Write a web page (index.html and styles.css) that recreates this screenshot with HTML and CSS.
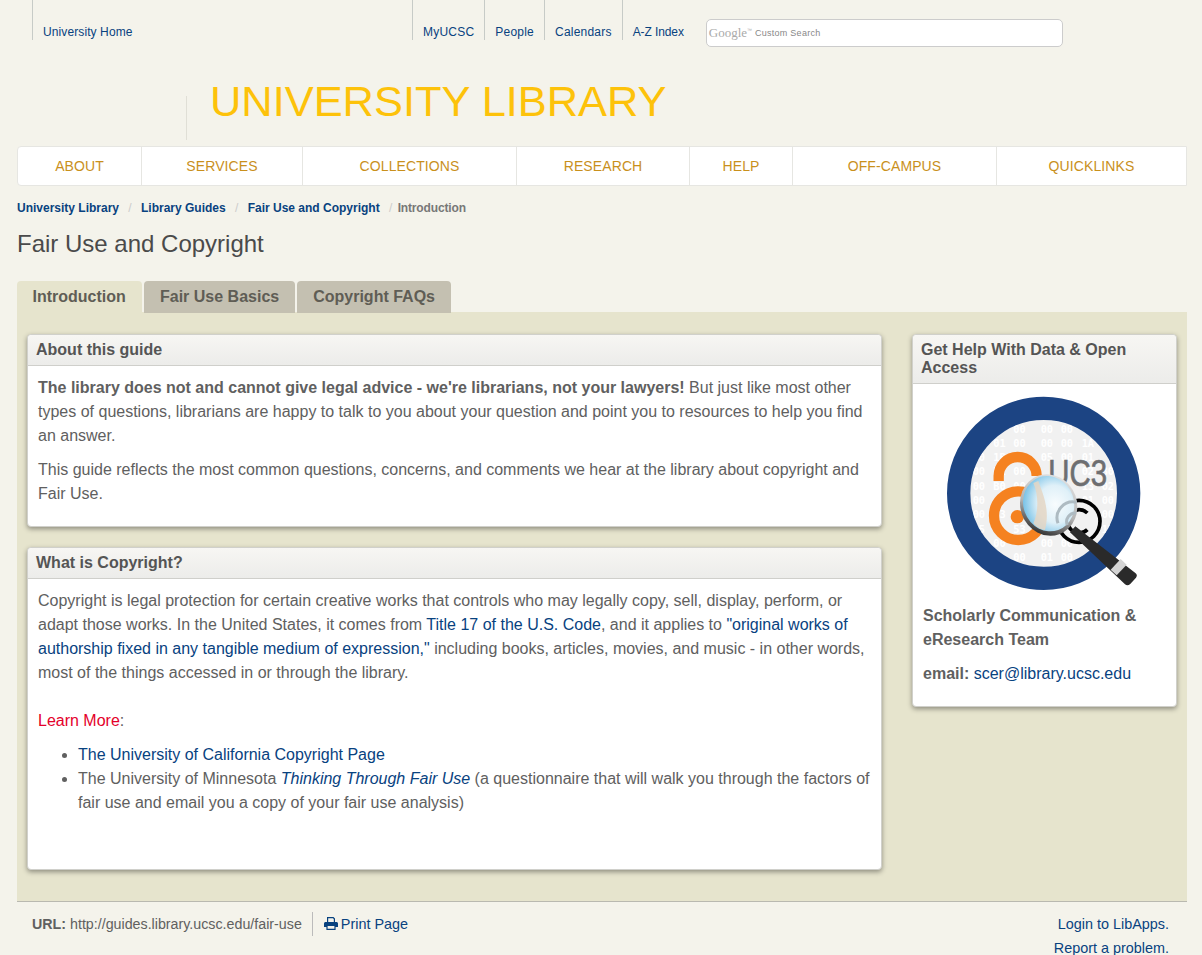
FILE: index.html
```html
<!DOCTYPE html>
<html lang="en">
<head>
<meta charset="utf-8">
<title>Fair Use and Copyright</title>
<link rel="stylesheet" href="styles.css">
</head>
<body>
<div class="topbar">
  <ul class="util util-left">
    <li><a href="#">University Home</a></li>
  </ul>
  <ul class="util util-right">
    <li><a href="#">MyUCSC</a></li>
    <li><a href="#">People</a></li>
    <li><a href="#">Calendars</a></li>
    <li><a href="#">A-Z Index</a></li>
  </ul>
  <div class="search"><span class="g-logo">Google</span><span class="g-tm">™</span><span class="g-text">Custom Search</span></div>
</div>
<div class="brand"><h1 class="brand-title">UNIVERSITY LIBRARY</h1></div>
<nav class="mainnav">
  <a href="#">ABOUT</a>
  <a href="#">SERVICES</a>
  <a href="#">COLLECTIONS</a>
  <a href="#">RESEARCH</a>
  <a href="#">HELP</a>
  <a href="#">OFF-CAMPUS</a>
  <a href="#">QUICKLINKS</a>
</nav>
<ol class="crumbs">
  <li><a href="#">University Library</a></li>
  <li><a href="#">Library Guides</a></li>
  <li><a href="#">Fair Use and Copyright</a></li>
  <li class="current">Introduction</li>
</ol>
<h2 class="page-title">Fair Use and Copyright</h2>
<div class="tabs">
  <a class="tab active" href="#">Introduction</a>
  <a class="tab" href="#">Fair Use Basics</a>
  <a class="tab" href="#">Copyright FAQs</a>
</div>
<main class="content">
  <div class="col-main">
    <section class="panel panel-about">
      <h3 class="panel-head">About this guide</h3>
      <div class="panel-body">
        <p><strong>The library does not and cannot give legal advice - we're librarians, not your lawyers!</strong> But just like most other types of questions, librarians are happy to talk to you about your question and point you to resources to help you find an answer.</p>
        <p>This guide reflects the most common questions, concerns, and comments we hear at the library about copyright and Fair Use.</p>
      </div>
    </section>
    <section class="panel panel-copy">
      <h3 class="panel-head">What is Copyright?</h3>
      <div class="panel-body">
        <p class="flush">Copyright is legal protection for certain creative works that controls who may legally copy, sell, display, perform, or adapt those works. In the United States, it comes from <a href="#">Title 17 of the U.S. Code</a>, and it applies to <a href="#">"original works of authorship fixed in any tangible medium of expression,"</a> including books, articles, movies, and music - in other words, most of the things accessed in or through the library.</p>
        <p class="learn"><span class="red">Learn More</span>:</p>
        <ul class="links">
          <li><a href="#">The University of California Copyright Page</a></li>
          <li>The University of Minnesota <a href="#"><em>Thinking Through Fair Use</em></a> (a questionnaire that will walk you through the factors of fair use and email you a copy of your fair use analysis)</li>
        </ul>
      </div>
    </section>
  </div>
  <aside class="col-side">
    <section class="panel panel-side">
      <h3 class="panel-head">Get Help With Data &amp; Open Access</h3>
      <div class="panel-body side-body">
        <svg class="logo" viewBox="0 0 690 645" width="230" height="215" role="img" aria-label="UC3 logo">
          <defs>
            <radialGradient id="lens" cx="62%" cy="55%" r="62%">
              <stop offset="0" stop-color="#f8fcfe"/>
              <stop offset=".55" stop-color="#dff0f8"/>
              <stop offset="1" stop-color="#7cc4e8"/>
            </radialGradient>
            <linearGradient id="rim" x1="1" y1="0" x2=".2" y2="1">
              <stop offset="0" stop-color="#eeeeee"/>
              <stop offset=".6" stop-color="#b5b5b5"/>
              <stop offset="1" stop-color="#1e1e1e"/>
            </linearGradient>
            <clipPath id="inner"><circle cx="341" cy="325" r="220"/></clipPath>
          </defs>
          <circle cx="341" cy="325" r="255" fill="#f1f1f1" stroke="#1c4483" stroke-width="70"/>
          <g class="hex" clip-path="url(#inner)">
            <text x="250" y="143">00</text><text x="332" y="143">00</text><text x="392" y="143">00</text>
            <text x="190" y="185">01</text><text x="250" y="185">00</text><text x="332" y="185">00</text><text x="392" y="185">00</text><text x="455" y="185">1A</text>
            <text x="128" y="227">00</text><text x="190" y="227">1B</text><text x="332" y="227">05</text><text x="392" y="227">00</text><text x="455" y="227">01</text>
            <text x="128" y="270">00</text><text x="190" y="270">E1</text><text x="250" y="270">00</text><text x="455" y="270">02</text><text x="515" y="270">30</text>
            <text x="128" y="315">00</text><text x="190" y="315">B0</text><text x="250" y="315">00</text><text x="455" y="315">13</text><text x="515" y="315">02</text>
            <text x="128" y="358">00</text><text x="455" y="358">01</text><text x="515" y="358">00</text>
            <text x="128" y="400">00</text><text x="190" y="400">13</text><text x="455" y="400">0D</text><text x="515" y="400">00</text>
            <text x="128" y="443">15</text><text x="250" y="443">53</text><text x="515" y="443">12</text>
            <text x="190" y="485">00</text><text x="332" y="485">00</text><text x="392" y="485">00</text>
            <text x="250" y="527">00</text><text x="332" y="527">01</text><text x="392" y="527">00</text>
          </g>
          <text class="uc3" x="355" y="304" textLength="176" lengthAdjust="spacingAndGlyphs">UC3</text>
          <path d="M206 288 V273 A57 57 0 0 1 320 273" fill="none" stroke="#f58220" stroke-width="31"/>
          <circle cx="265" cy="392" r="73" fill="none" stroke="#f58220" stroke-width="31"/>
          <circle cx="262" cy="395" r="20" fill="#f58220"/>
          <circle cx="447" cy="409" r="63" fill="#f1f1f1" stroke="#000" stroke-width="11"/>
          <path d="M472 384 A35 35 0 1 0 472 434" fill="none" stroke="#000" stroke-width="11"/>
          <path d="M436 424 L420 442 L585 598 Q592 604 600 598 L618 578 Q624 570 616 564Z" fill="#2a2a2a"/>
          <path d="M572 522 L542 554 L560 571 L590 539Z" fill="#d4d4d4"/>
          <ellipse cx="356" cy="360" rx="85" ry="93" transform="rotate(-20 356 360)" fill="url(#rim)"/>
          <ellipse cx="356" cy="356" rx="76" ry="84" transform="rotate(-20 356 356)" fill="url(#lens)"/>
          <path d="M325 288 C335 320 362 370 345 435 C328 433 318 425 310 415 C326 380 326 330 310 294Z" fill="#e4d6c4" opacity=".85"/>
          <path d="M384 415 A48 48 0 0 1 440 352 M412 420 A26 26 0 0 1 438 384" fill="none" stroke="#aebbc2" stroke-width="9"/>
        </svg>
        <p class="team"><strong>Scholarly Communication &amp; eResearch Team</strong></p>
        <p class="mail"><strong>email:</strong> <a href="#">scer@library.ucsc.edu</a></p>
      </div>
    </section>
  </aside>
</main>
<footer class="foot">
  <div class="foot-left">
    <span class="foot-url"><strong>URL:</strong> http://guides.library.ucsc.edu/fair-use</span>
    <a class="foot-print" href="#"><svg class="print-icon" viewBox="0 0 14 13" width="14" height="13" aria-hidden="true"><path d="M3 0h6.500L11 1.500V5H9.800V2.200L9 1.300H4.200V5H3zM1.600 5h10.800c.9 0 1.600.7 1.600 1.600V10h-2.400v3H2.400v-3H0V6.600C0 5.700.7 5 1.600 5zM3.600 9v2.800h6.800V9z"/></svg> Print Page</a>
  </div>
  <div class="foot-right">
    <p><a href="#">Login to LibApps.</a></p>
    <p><a href="#">Report a problem.</a></p>
  </div>
</footer>
</body>
</html>
```
FILE: styles.css
```css
* { box-sizing: border-box; }
html, body { margin: 0; padding: 0; }
body {
  height: 955px;
  overflow: hidden;
  background: #f4f3eb;
  color: #606060;
  font-family: "Liberation Sans", Arial, sans-serif;
  font-size: 16px;
  line-height: 24px;
}
a { color: #08427f; text-decoration: none; }
p { margin: 0; }

.topbar { display: flex; height: 60px; padding-left: 32px; }
.util { display: flex; list-style: none; margin: 0; padding: 0; height: 40px; font-size: 12px; line-height: 16px; letter-spacing: .22px; }
.util li { border-left: 1px solid #c7cbc7; padding: 24px 10px 0; }
.util-left { width: 380px; letter-spacing: .1px; }
.util-right li:last-child { letter-spacing: -.1px; }
.search { width: 357px; height: 28px; margin: 19px 0 0 12px; background: #fff; border: 1px solid #ccc; border-radius: 5px; padding-left: 2px; display: flex; align-items: center; white-space: nowrap; line-height: 26px; }
.g-logo { font-family: "Liberation Serif", serif; font-size: 13px; color: #aaa; }
.g-tm { font-size: 5px; color: #aaa; margin: -6px 3px 0 0; }
.g-text { font-size: 9px; color: #888; letter-spacing: .25px; }

.brand { height: 86px; padding: 36px 0 6px 186px; }
.brand-title { margin: 0; height: 44px; border-left: 1px solid #e0dfd6; padding-left: 23px; color: #fdc20a; font-size: 43.400px; font-weight: 400; line-height: 11px; white-space: nowrap; }

.mainnav { display: grid; grid-template-columns: 123px 161px 214px 173px 103px 204px 190px; width: 1170px; height: 40px; margin-left: 17px; background: #fff; border: 1px solid #e6e6e2; border-radius: 4px 0 0 4px; font-size: 14px; letter-spacing: .1px; }
.mainnav a { color: #c9901c; text-align: center; line-height: 38px; border-left: 1px solid #e6e6e2; }
.mainnav a:first-child { border-left: 0; }

.crumbs { display: flex; list-style: none; margin: 14px 0 0; padding: 0 0 0 17px; font-size: 12px; line-height: 16px; font-weight: 700; }
.crumbs li + li::before { content: "/"; color: #ccc; font-weight: 400; padding: 0 9.300px; }
.crumbs .current { color: #777; letter-spacing: -.15px; }
.crumbs .current::before { padding-right: 5.500px; }

.page-title { margin: 15px 0 0 17px; color: #4a4a4a; font-size: 24px; font-weight: 400; line-height: 26px; }

.tabs { display: flex; gap: 2px; margin: 24px 0 0 17px; height: 31px; }
.tab { display: block; height: 32px; padding: 0 16px; border-radius: 4px 4px 0 0; background: #c4c0b1; color: #5f5d55; font-size: 16px; font-weight: 700; line-height: 32px; }
.tab.active { background: #e6e4cd; width: 125px; padding: 0 15.500px; }

.content { display: flex; justify-content: space-between; width: 1170px; height: 590px; margin-left: 17px; padding: 22px 10px 0; background: #e6e4cd; border-bottom: 1px solid #b9b9b0; }
.col-main { width: 855px; }
.col-side { width: 265px; }

.panel { background: #fff; border: 1px solid #d0d0cb; border-radius: 4px; box-shadow: 0 2px 5px rgba(0,0,0,.38); }
.panel-about { height: 193px; }
.panel-copy { height: 323px; margin-top: 20px; }
.panel-side { height: 373px; }
.panel-head { margin: 0; padding: 6px 7px 6px 8px; background: linear-gradient(#f7f6f3, #ececea); border-bottom: 1px solid #cfcfcb; border-radius: 4px 4px 0 0; color: #555; font-size: 16px; font-weight: 700; line-height: 18px; }
.panel-body { padding: 10px 10px 0; }
.panel-about .panel-body p + p { margin-top: 10px; }
.learn { margin-top: 24px; }
.red { color: #e4002b; }
.links { margin: 10px 0 0; padding-left: 40px; }
.side-body { padding: 1px 10px 0; }
.logo { display: block; margin: 0 auto; }
.team { margin-top: 4px; }
.mail { margin-top: 10px; }
.hex text { fill: #fff; font-family: "DejaVu Sans Mono", monospace; font-size: 31px; font-weight: 700; }
.uc3 { fill: #6d6e70; stroke: #6d6e70; stroke-width: 2px; font-family: "Liberation Sans", sans-serif; font-size: 108px; }

.foot { display: flex; justify-content: space-between; font-size: 14.400px; padding: 10px 33px 0 32px; }
.foot-left { display: flex; align-items: center; height: 24px; }
.foot-url { font-size: 14.250px; padding-right: 10px; border-right: 1px solid #bbb; }
.foot-print { padding-left: 11px; }
.print-icon { fill: #08427f; vertical-align: -1px; margin-right: -1px; }
.foot-right { text-align: right; }
.foot-right p { height: 24px; }
```
